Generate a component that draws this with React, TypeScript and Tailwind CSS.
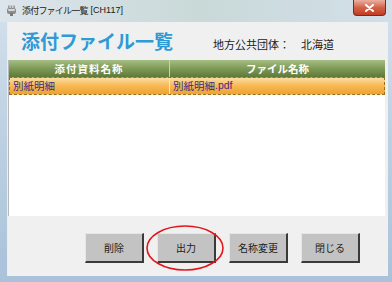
import React from "react";

const jp = { fontFamily: '"Noto Sans CJK JP", "Noto Sans", sans-serif' };

function Btn({ label }: { label: string }) {
  return (
    <div className="w-[59px] h-[30px] bg-[#c3c3c3] border-t border-l border-t-[#e6e6e6] border-l-[#e6e6e6] border-r-2 border-b-2 border-r-[#3a3a3a] border-b-[#3a3a3a] flex items-center justify-center text-[10px] text-[#222]">
      {label}
    </div>
  );
}

export default function App() {
  return (
    <div
      className="w-[392px] h-[282px] overflow-hidden flex flex-col bg-gradient-to-b from-[#d4e1ec] via-[#bcd0e2] to-[#a9c2da]"
      style={jp}
    >
      {/* title bar */}
      <div className="h-[22px] flex items-start shrink-0 bg-gradient-to-r from-[#dde5ec] via-[#c9d9d8] to-[#d2dfe9]">
        <div className="flex items-center h-[21px] pl-[6px]">
          <svg width="11" height="11" viewBox="0 0 11 11">
            <rect x="1" y="3" width="9" height="6" rx="2" fill="#8c8c8c" />
            <rect x="2" y="0.5" width="1.6" height="3" fill="#9a9a9a" />
            <rect x="4.7" y="0.5" width="1.6" height="3" fill="#9a9a9a" />
            <rect x="7.4" y="0.5" width="1.6" height="3" fill="#9a9a9a" />
            <rect x="4" y="8" width="3" height="3" fill="#7a7a7a" />
            <rect x="2" y="4" width="7" height="2" rx="1" fill="#d8d8d8" />
          </svg>
          <span className="ml-[5px] text-[9px] text-[#1a1a1a] tracking-[-0.8px]">添付ファイル一覧</span>
          <span className="ml-[3px] text-[9px] text-[#1a1a1a]" style={{ fontFamily: '"Liberation Sans", sans-serif' }}>
            [CH117]
          </span>
        </div>
        <div className="ml-auto mr-[6px] w-[33px] h-[16px] rounded-b-[4px] border border-t-0 border-[#7a2a1e] bg-gradient-to-b from-[#eab0a0] via-[#d4624a] to-[#c23a20] flex items-center justify-center">
          <svg width="9" height="8" viewBox="0 0 9 8">
            <path d="M1 1 L8 7 M8 1 L1 7" stroke="#ffffff" strokeWidth="2" strokeLinecap="round" />
          </svg>
        </div>
      </div>

      {/* client */}
      <div className="ml-[7px] mr-[4px] h-[254px] bg-[#f0f0f0] flex flex-col shrink-0 border-l border-[#e8eef4]">
        <div className="h-[38px] flex items-center pl-[13px] shrink-0">
          <span className="text-[19px] font-bold text-[#2e9ad6] leading-none mt-[-1px]">添付ファイル一覧</span>
          <span className="ml-[40px] text-[11px] text-[#1a1a1a] leading-none mt-[6px]">地方公共団体：</span>
          <span className="ml-[11px] text-[11px] text-[#1a1a1a] leading-none mt-[6px]">北海道</span>
        </div>

        <div className="h-[156px] mr-[3px] bg-white border-l border-[#b8b8b8] flex flex-col shrink-0">
          <div className="h-[17px] flex bg-gradient-to-b from-[#a6be84] via-[#7f9a58] to-[#5f7a38] text-white text-[10.5px] font-bold">
            <div className="w-[161px] flex items-center justify-center border-r border-[#c3d3ab] tracking-[1px]">添付資料名称</div>
            <div className="flex-1 flex items-center justify-center">ファイル名称</div>
          </div>
          <div className="h-[18px] flex bg-gradient-to-b from-[#fcdca0] via-[#f6b850] to-[#f0a230] border border-dashed border-[#9a7020] text-[10.5px] text-[#42288a]">
            <div className="w-[160px] flex items-center pl-[3px] border-r border-[#fde6bd]">別紙明細</div>
            <div className="flex-1 flex items-center pl-[3px]">
              別紙明細<span style={{ fontFamily: '"Liberation Sans", sans-serif' }}>.pdf</span>
            </div>
          </div>
        </div>

        <div className="flex-1 flex items-start justify-end pr-[28px] pt-[17px] gap-[13px]">
          <Btn label="削除" />
          <div className="relative">
            <Btn label="出力" />
            <svg className="absolute left-[-12px] top-[-9px]" width="80" height="48" viewBox="0 0 80 48">
              <ellipse cx="40" cy="24" rx="38" ry="22" fill="none" stroke="#e3141c" strokeWidth="1.6" />
            </svg>
          </div>
          <Btn label="名称変更" />
          <Btn label="閉じる" />
        </div>
      </div>
    </div>
  );
}
